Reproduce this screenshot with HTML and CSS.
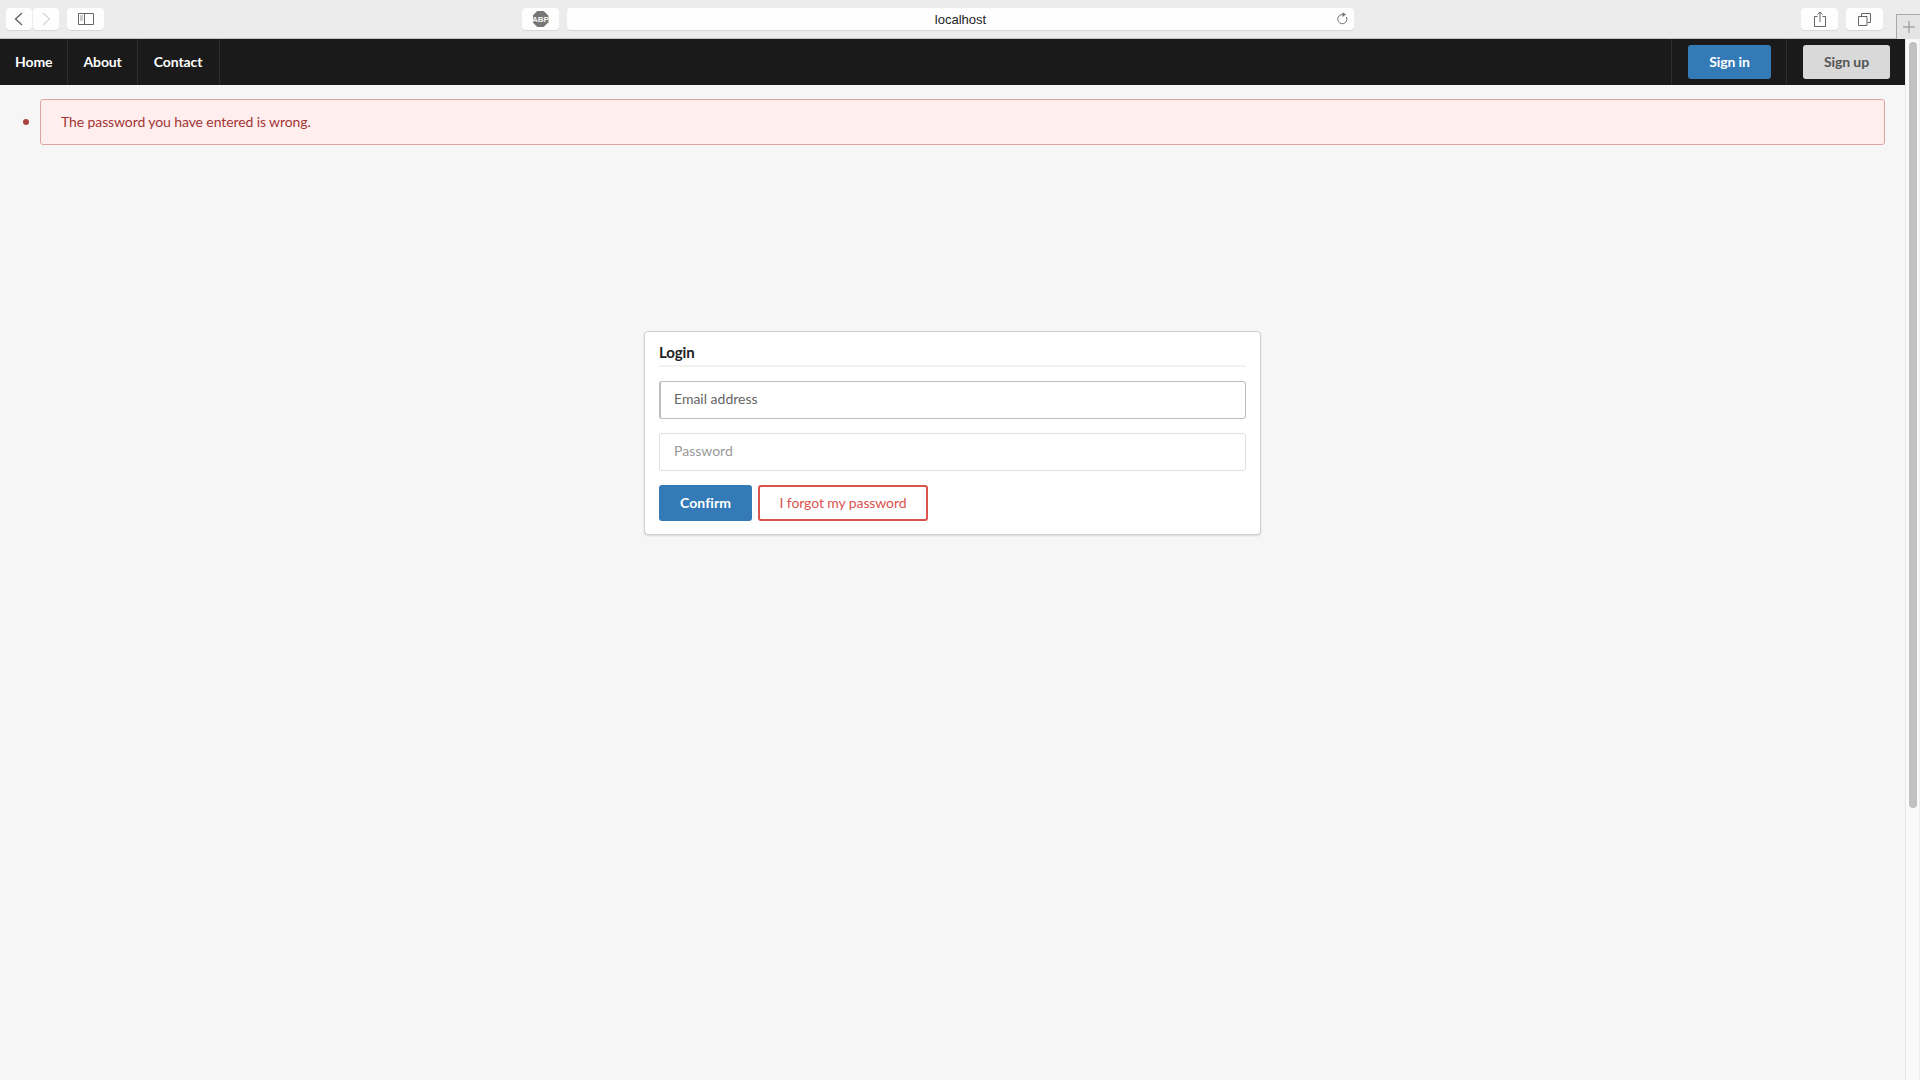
FILE: index.html
```html
<!DOCTYPE html>
<html lang="en">
  <head>
    <meta charset="UTF-8" />
    <meta name="viewport" content="width=device-width, initial-scale=1.0" />
    <title>Login</title>
    <link rel="stylesheet" href="styles.css">
  </head>
  <body>
    <!-- Browser toolbar -->
    <div class="toolbar">
      <div class="tool-group">
        <div class="tool-btn tool-nav">
          <svg width="12" height="16" viewBox="0 0 12 16"><path d="M9 2 L2.500 8 L9 14" fill="none" stroke="#5f5f5f" stroke-width="1.300" /></svg>
        </div>
        <div class="tool-btn tool-nav">
          <svg width="12" height="16" viewBox="0 0 12 16"><path d="M3 2 L9.500 8 L3 14" fill="none" stroke="#d6d6d6" stroke-width="1.300" /></svg>
        </div>
        <div class="tool-btn tool-side">
          <svg width="16" height="12" viewBox="0 0 16 12"><path d="M.5.5h15v11H.5zM6.500.5v11" fill="none" stroke="#666" /><path d="M2 3h3M2 5h3M2 7h3" stroke="#999" /></svg>
        </div>
      </div>
      <div class="tool-center">
        <div class="tool-btn tool-abp">
          <span class="abp-badge">ABP</span>
        </div>
        <div class="url-bar">
          <span class="url-text">localhost</span>
          <svg class="url-reload" width="12" height="13" viewBox="0 0 12 13"><path d="M7 2.600 A4.600 4.600 0 1 0 10.400 5" fill="none" stroke="#707070" /><path d="M6.500 .2 L10 2.600 L6.500 5 Z" fill="#707070" /></svg>
        </div>
      </div>
      <div class="tool-group tool-right">
        <div class="tool-btn tool-action">
          <svg width="12" height="16" viewBox="0 0 12 16"><path d="M3.500 5.500H.5v10h11v-10H8.500M6 11V1M3.500 3.500 6 1l2.500 2.500" fill="none" stroke="#666" /></svg>
        </div>
        <div class="tool-btn tool-action">
          <svg width="13" height="13" viewBox="0 0 13 13"><path d="M.5 3.500h8.500v9H.5zM3.500 3V.5h9V9.500H9.500" fill="none" stroke="#666" /></svg>
        </div>
      </div>
    </div>
    <div class="new-tab">
      <svg width="12" height="12" viewBox="0 0 12 12"><path d="M6 0v12M0 6h12" stroke="#8a8a8a" /></svg>
    </div>

    <div class="window">
      <div class="page">
        <nav class="navbar">
          <ul class="nav-links">
            <li><a href="#">Home</a></li>
            <li><a href="#">About</a></li>
            <li><a href="#">Contact</a></li>
          </ul>
          <div class="nav-actions">
            <div class="nav-action nav-action-in"><a class="btn btn-blue btn-signin" href="#">Sign in</a></div>
            <div class="nav-action"><a class="btn btn-grey" href="#">Sign up</a></div>
          </div>
        </nav>

        <ul class="alerts">
          <li><div class="alert">The password you have entered is wrong.</div></li>
        </ul>

        <div class="login-wrap">
          <form class="card">
            <h2 class="card-title">Login</h2>
            <input class="field field-active" type="text" placeholder="Email address" />
            <input class="field" type="password" placeholder="Password" />
            <div class="card-actions">
              <button class="btn btn-blue btn-confirm" type="button">Confirm</button>
              <a class="btn btn-outline" href="#">I forgot my password</a>
            </div>
          </form>
        </div>
      </div>

      <div class="scrollbar">
        <div class="scroll-thumb"></div>
      </div>
    </div>
  </body>
</html>
```

FILE: styles.css
```css
* {
  box-sizing: border-box;
}

html,
body {
  height: 100%;
}

body {
  margin: 0;
  display: flex;
  flex-direction: column;
  overflow: hidden;
  font-family: Lato, "Open Sans", sans-serif;
  font-size: 14px;
  letter-spacing: -0.1px;
  background: #f6f6f6;
  color: #333;
}

a {
  text-decoration: none;
}

/* browser toolbar */
.toolbar {
  height: 39px;
  flex: none;
  display: flex;
  align-items: flex-start;
  justify-content: space-between;
  padding: 8px 37px 0 6px;
  background: #ececec;
  border-bottom: 1px solid #c4c4c4;
}

.tool-group {
  display: flex;
  gap: 1px;
}

.tool-center {
  position: absolute;
  left: 522px;
  display: flex;
  gap: 8px;
}

.tool-right {
  gap: 8px;
}

.tool-btn {
  height: 22px;
  display: flex;
  align-items: center;
  justify-content: center;
  background: #fefefe;
  border-radius: 4px;
  box-shadow: 0 1px 0 #d8d8d8;
}

.tool-nav {
  width: 26px;
}

.tool-side {
  width: 37px;
  margin-left: 7px;
}

.tool-abp {
  width: 37px;
}

.tool-action {
  width: 37px;
}

.abp-badge {
  width: 16px;
  height: 16px;
  display: flex;
  align-items: center;
  justify-content: center;
  clip-path: polygon(30% 0, 70% 0, 100% 30%, 100% 70%, 70% 100%, 30% 100%, 0 70%, 0 30%);
  background: #777;
  color: #f4f4f4;
  font-family: "Liberation Sans", sans-serif;
  font-size: 8px;
  font-weight: 700;
  letter-spacing: 0;
}

.url-bar {
  position: relative;
  width: 787px;
  height: 22px;
  display: flex;
  align-items: center;
  justify-content: center;
  background: #fefefe;
  border-radius: 4px;
  box-shadow: 0 1px 0 #d8d8d8;
}

.url-text {
  font-family: "Liberation Sans", sans-serif;
  font-size: 13px;
  letter-spacing: 0;
  color: #222;
}

.url-reload {
  position: absolute;
  right: 6px;
  top: 4px;
}

.new-tab {
  position: absolute;
  top: 14px;
  right: 0;
  width: 24px;
  height: 25px;
  display: flex;
  align-items: center;
  justify-content: center;
  background: #e4e4e4;
  border: 1px solid #a8a8a8;
  border-right: none;
  border-bottom: none;
}

/* page area */
.window {
  flex: 1;
  display: flex;
  min-height: 0;
}

.page {
  flex: 1;
  min-width: 0;
}

.scrollbar {
  width: 15px;
  flex: none;
  padding: 3px 2px 0 3px;
  background: #fafafa;
  border-left: 1px solid #e8e8e8;
  border-right: 1px solid #f0f0f0;
}

.scroll-thumb {
  width: 8px;
  height: 766px;
  background: #c1c1c1;
  border-radius: 4px;
}

.navbar {
  height: 46px;
  display: flex;
  justify-content: space-between;
  background: #1a1a1a;
}

.nav-links {
  display: flex;
  margin: 0;
  padding: 0;
  list-style: none;
}

.nav-links a {
  display: flex;
  align-items: center;
  height: 100%;
  padding: 0 17px 2px 16px;
  color: #fff;
  font-weight: 700;
  border-right: 1px solid #2e2e2e;
}

.nav-links li:first-child a,
.nav-links li:nth-child(2) a {
  padding-left: 15px;
  padding-right: 15px;
}

.nav-actions {
  display: flex;
}

.nav-action {
  display: flex;
  align-items: center;
  padding: 0 15px 0 16px;
}

.nav-action-in {
  border-left: 1px solid #2e2e2e;
  border-right: 1px solid #2e2e2e;
}

.btn {
  display: inline-flex;
  align-items: center;
  justify-content: center;
  height: 34px;
  padding-bottom: 2px;
  border-radius: 3px;
  font-family: inherit;
  font-size: 14px;
  font-weight: 700;
  letter-spacing: -0.1px;
}

.btn-blue {
  background: #337ab7;
  color: #fff;
  border: none;
}

.btn-signin {
  width: 83px;
}

.btn-grey {
  width: 87px;
  background: #d9d9d9;
  color: #555;
}

.alerts {
  margin: 14px 20px 0 0;
  padding: 0 0 0 23px;
  list-style: none;
}

.alerts li {
  display: flex;
  align-items: center;
  gap: 11px;
}

.alerts li::before {
  content: "";
  width: 6px;
  height: 6px;
  flex: none;
  border-radius: 50%;
  background: #a94442;
}

.alert {
  flex: 1;
  height: 46px;
  display: flex;
  align-items: center;
  padding: 0 20px 2px;
  background: #ffeeee;
  border: 1px solid #dba5a5;
  border-radius: 3px;
  color: #a33535;
}

.login-wrap {
  display: flex;
  margin-top: 186px;
  padding-left: 644px;
}

.card {
  width: 617px;
  height: 204px;
  padding: 11px 14px 0;
  background: #fff;
  border: 1px solid #d0d0d0;
  border-radius: 4px;
  box-shadow: 0 1px 2px rgba(0, 0, 0, 0.12);
}

.card-title {
  margin: 0 0 14px;
  height: 24px;
  font-size: 15px;
  font-weight: 700;
  line-height: 18px;
  color: #222;
  border-bottom: 2px solid #f2f2f2;
}

.field {
  display: block;
  width: 100%;
  height: 38px;
  margin-bottom: 14px;
  padding: 0 14px 4px;
  border: 1px solid #e0e0e0;
  border-radius: 3px;
  background: #fff;
  font-family: inherit;
  font-size: 14px;
  letter-spacing: 0;
  outline: none;
}

.field::placeholder {
  color: #999;
  opacity: 1;
}

.field-active {
  padding-left: 13px;
  border-color: #bdbdbd;
  border-left-width: 2px;
}

.field-active::placeholder {
  color: #666;
}

.card-actions {
  display: flex;
  gap: 6px;
}

.btn-confirm {
  width: 93px;
  height: 36px;
  letter-spacing: 0.1px;
}

.btn-outline {
  width: 170px;
  height: 36px;
  background: #fff;
  border: 2px solid #d9534f;
  color: #d9534f;
  font-weight: 400;
}
```
